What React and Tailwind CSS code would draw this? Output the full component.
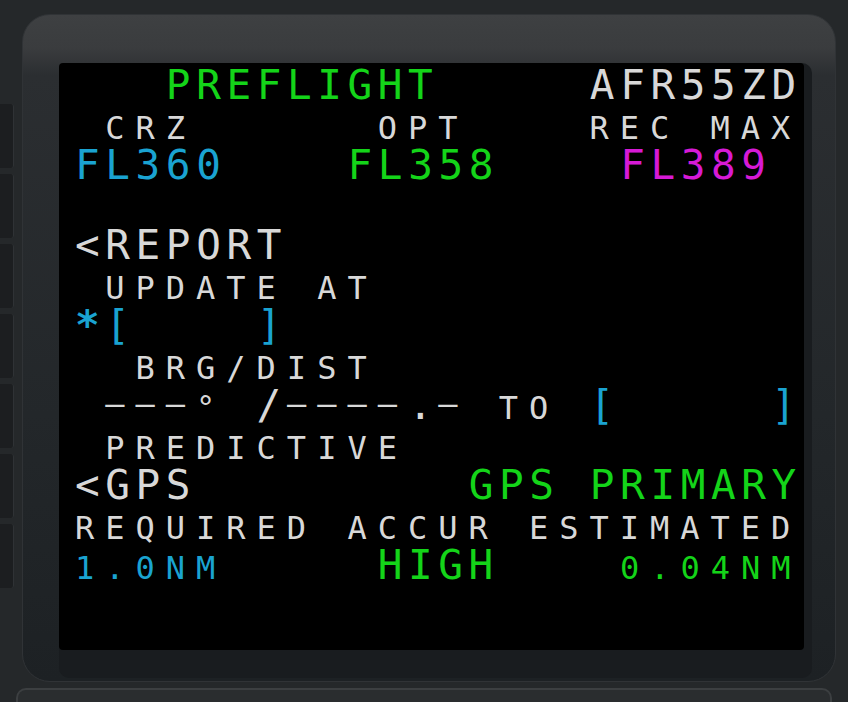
import React from "react";

// MCDU page: 24 columns x 13 lines, large and small glyphs share one pitch
const LG = "text-[41px] tracking-[5.6px]";
const SM = "text-[32px] tracking-[11px]";
const DASH = "text-[32px] tracking-[11px] relative -top-[4px]";

const WHITE = "text-[#d8d8d8]";
const GREEN = "text-[#14d419]";
const CYAN = "text-[#1aa3d1]";
const MAGENTA = "text-[#d61ad6]";

const lines = [
  [
    [LG, GREEN, "   PREFLIGHT     "],
    [LG, WHITE, "AFR55ZD"],
  ],
  [[SM, WHITE, " CRZ      OPT    REC MAX"]],
  [
    [LG, CYAN, "FL360    "],
    [LG, GREEN, "FL358    "],
    [LG, MAGENTA, "FL389"],
  ],
  [],
  [[LG, WHITE, "<REPORT"]],
  [[SM, WHITE, " UPDATE AT"]],
  [[LG + " font-bold", CYAN, "*"], [LG, CYAN, "[    ]"]],
  [[SM, WHITE, "  BRG/DIST"]],
  [
    [SM, WHITE, " "],
    [DASH, WHITE, "–––"],
    [SM, WHITE, "° "],
    [LG, WHITE, "/"],
    [DASH, WHITE, "––––"],
    [LG, WHITE, "."],
    [DASH, WHITE, "–"],
    [SM, WHITE, " TO "],
    [LG, CYAN, "[     ]"],
  ],
  [[SM, WHITE, " PREDICTIVE"]],
  [
    [LG, WHITE, "<GPS         "],
    [LG, GREEN, "GPS PRIMARY"],
  ],
  [[SM, WHITE, "REQUIRED ACCUR ESTIMATED"]],
  [
    [SM, CYAN, "1.0NM     "],
    [LG, GREEN, "HIGH    "],
    [SM, GREEN, "0.04NM"],
  ],
];

const LskStrip = () => (
  <div className="w-[14px] flex flex-col gap-[6px] pt-[104px]">
    {[0, 1, 2, 3, 4, 5, 6].map((i) => (
      <div
        key={i}
        className="h-[64px] bg-[#1c1e20] rounded-r-[3px] border-r border-[#2f3235]"
      />
    ))}
  </div>
);

const Screen = () => (
  <div className="w-[745px] h-[587px] bg-black rounded-[4px] pt-[2px] pl-[16px] font-['DejaVu_Sans_Mono',monospace] text-[41px] leading-[40px]">
    {lines.map((parts, i) => (
      <div key={i} className="h-[40px] whitespace-pre">
        {parts.map(([size, color, text], j) => (
          <span key={j} className={`${size} ${color}`}>
            {text}
          </span>
        ))}
      </div>
    ))}
  </div>
);

export default function App() {
  return (
    <div className="w-[848px] h-[702px] bg-[#25282a] overflow-hidden flex flex-col">
      <div className="flex h-[686px]">
        <LskStrip />
        <div className="ml-[8px] mt-[14px] w-[814px] h-[668px] rounded-[28px] border border-[#303336] bg-[linear-gradient(180deg,#3e4042_0%,#3a3c3e_5%,#2b2e31_9%,#23272a_60%,#1d2124_100%)] pt-[48px] pl-[36px]">
          <div className="w-[753px] rounded-[10px] bg-[#191c1f] pb-[28px]">
            <Screen />
          </div>
        </div>
      </div>
      <div className="mx-[16px] mt-[2px] flex-1 rounded-t-[10px] border-t-2 border-x-2 border-[#3c3f41] bg-[#2a2d2f]" />
    </div>
  );
}
